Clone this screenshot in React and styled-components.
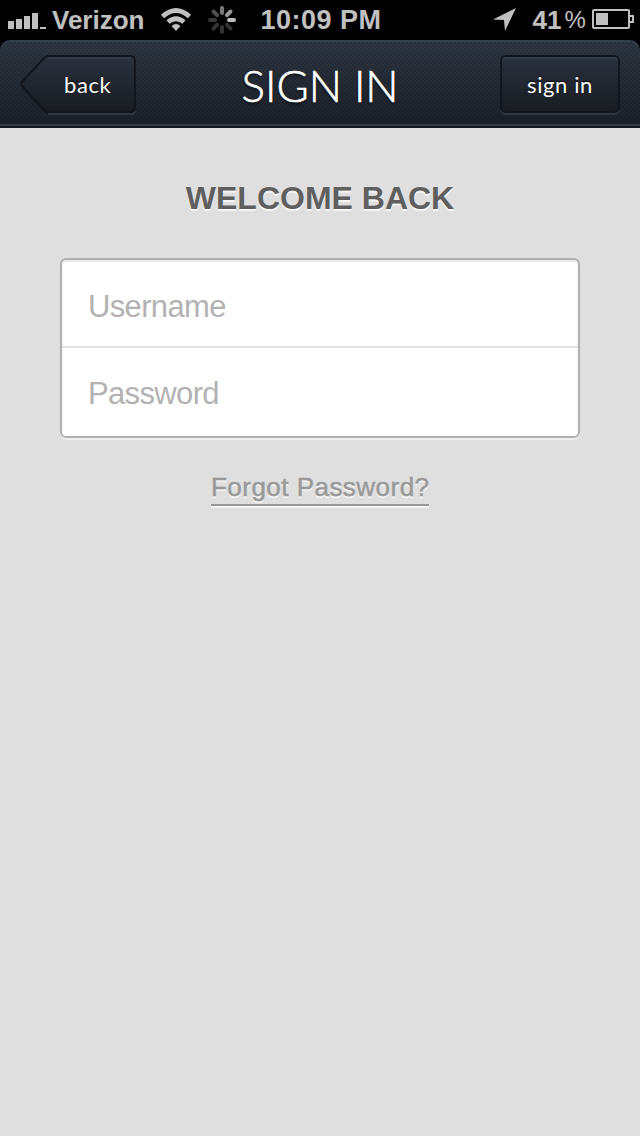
import React from 'react';
import styled, { createGlobalStyle } from 'styled-components';

const GlobalStyle = createGlobalStyle`
  *, *::before, *::after { box-sizing: border-box; }
  body { margin: 0; background: #000; }
`;

const Screen = styled.div`
  width: 640px;
  min-height: 1136px;
  display: flex;
  flex-direction: column;
  background: #dfdfdf;
  font-family: "Liberation Sans", Arial, sans-serif;
`;

const StatusBar = styled.header`
  height: 40px;
  display: flex;
  align-items: center;
  padding: 0 5px 0 8px;
  background: #000;
  color: #c0c0c0;
`;

const StatusText = styled.span`
  font-size: ${(p) => p.$size || '26px'};
  line-height: 40px;
  font-weight: ${(p) => (p.$light ? 400 : 700)};
  letter-spacing: ${(p) => p.$tracking || '0'};
  margin-left: ${(p) => p.$left || '0'};
  white-space: nowrap;
`;

const Clock = styled(StatusText)`
  width: 122px;
`;

const StatusIcon = styled.svg`
  display: block;
  flex: none;
  margin-left: ${(p) => p.$left || '0'};
`;

const NavShell = styled.div`
  background: #000;
`;

const NavBar = styled.nav`
  height: 88px;
  display: flex;
  align-items: flex-start;
  justify-content: space-between;
  padding: 15px 20px 0;
  border-radius: 10px 10px 0 0;
  background:
    radial-gradient(circle at 1px 1px, rgba(0, 0, 0, 0.1) 0.8px, transparent 1px) 0 0 / 4px 4px,
    radial-gradient(circle at 1px 1px, rgba(0, 0, 0, 0.1) 0.8px, transparent 1px) 2px 2px / 4px 4px,
    linear-gradient(#2e3743, #1b1f27);
  box-shadow:
    inset 0 2px 0 #33404c,
    inset 0 -2px 0 #14171d,
    inset 0 -4px 0 #363c43;
`;

const Title = styled.h1`
  margin: 0;
  font: 300 44px/60px Lato, sans-serif;
  color: #fff;
  -webkit-text-stroke: 0.6px #fff;
  text-shadow: 0 2px 3px rgba(0, 0, 0, 0.6);
  white-space: nowrap;
`;

const buttonLabel = `
  font: 400 22px/60px Lato, sans-serif;
  letter-spacing: 0.6px;
  color: #fff;
  text-shadow: 0 -1px 1px rgba(0, 0, 0, 0.8);
`;

const BackButton = styled.button`
  ${buttonLabel}
  width: 120px;
  height: 60px;
  padding: 0 0 0 44px;
  border: 0;
  text-align: left;
  background: none;
  display: grid;
`;

const BackShape = styled.svg`
  grid-area: 1 / 1;
  margin-left: -44px;
`;

const BackLabel = styled.span`
  grid-area: 1 / 1;
`;

const ActionButton = styled.button`
  ${buttonLabel}
  width: 120px;
  height: 58px;
  padding: 2px 0 0;
  border: 2px solid #12151b;
  border-radius: 6px;
  background: linear-gradient(#29313d, #191c22);
  line-height: 52px;
  box-shadow: inset 0 2px 0 rgba(75, 88, 102, 0.35), 0 2px 0 #30363e;
`;

const Content = styled.main`
  flex: 1;
  display: flex;
  flex-direction: column;
  align-items: center;
  padding-top: 50px;
`;

const Heading = styled.h2`
  margin: 0;
  font-size: 32px;
  line-height: 40px;
  font-weight: 700;
  color: #5f5f5f;
  text-shadow: 0 2px 0 #f6f6f6;
  white-space: nowrap;
`;

const FieldGroup = styled.section`
  width: 520px;
  height: 180px;
  margin-top: 40px;
  border: 2px solid #b0b0b0;
  border-radius: 6px;
  background: #fff;
  box-shadow: inset 0 2px 2px #e6e6e6, 0 2px 0 #efefef;
`;

const Field = styled.div`
  height: 88px;
  padding: ${(p) => (p.$divided ? '3px' : '2px')} 0 0 26px;
  color: #b2b2b2;
  font-size: 31px;
  line-height: 88px;
  letter-spacing: -0.65px;
  border-bottom: ${(p) => (p.$divided ? '2px solid #e2e2e2' : '0')};
`;

const ForgotLink = styled.a`
  margin-top: 34px;
  width: 218px;
  height: 34px;
  font-size: 26px;
  line-height: 30px;
  letter-spacing: 0.47px;
  white-space: nowrap;
  color: #999;
  -webkit-text-stroke: 0.5px #999;
  border-bottom: 2px solid #999;
  box-shadow: 0 2px 0 #f4f4f4;
  text-shadow: 0 2px 0 #f4f4f4;
`;

const spokes = ['#777', '#999', '#bbb', '#333', '#333', '#333', '#383838', '#505050'];

export default function App() {
  return (
    <>
      <GlobalStyle />
      <Screen>
        <StatusBar>
          <StatusIcon width="38" height="40" fill="#c0c0c0">
            <path d="M0 21h6v8H0zM8 19h6v10H8zM16 16h6v13h-6zM24 13h6v16h-6zM32 27h6v2h-6z" />
          </StatusIcon>
          <StatusText $left="6px">Verizon</StatusText>
          <StatusIcon $left="16px" width="32" height="40" fill="none" stroke="#c0c0c0">
            <path d="M2.500 16.500Q16 4.500 29.500 16.500" strokeWidth="4.800" />
            <path d="M8 22Q16 15.500 24 22" strokeWidth="4.800" />
            <path d="M11.500 26Q16 22 20.500 26L16 31Z" fill="#c0c0c0" stroke="none" />
          </StatusIcon>
          <StatusIcon $left="16px" width="28" height="40">
            {spokes.map((color, i) => (
              <path
                key={i}
                d="M14 8v5"
                stroke={color}
                strokeWidth="4"
                strokeLinecap="round"
                transform={`rotate(${i * 45} 14 20)`}
              />
            ))}
          </StatusIcon>
          <Clock $left="24px" $size="27px" $tracking="0.5px">10:09 PM</Clock>
          <StatusIcon $left="111px" width="24" height="40" fill="#c0c0c0">
            <path d="M23 8L12 31L11 20L0 19.500Z" />
          </StatusIcon>
          <StatusText $left="15px">41</StatusText>
          <StatusText $light $left="3px" $size="24px">%</StatusText>
          <StatusIcon $left="auto" width="43" height="40" fill="none" stroke="#c0c0c0" strokeWidth="2">
            <rect x="1" y="10" width="36" height="18" rx="1" />
            <path d="M38 16h3v6h-3" />
            <path d="M4 13h12v12H4z" fill="#c0c0c0" stroke="none" />
          </StatusIcon>
        </StatusBar>
        <NavShell>
          <NavBar>
            <BackButton>
              <BackShape width="120" height="60">
                <defs>
                  <linearGradient id="backFill" x1="0" y1="0" x2="0" y2="1">
                    <stop offset="0" stopColor="#29313d" />
                    <stop offset="1" stopColor="#191c22" />
                  </linearGradient>
                </defs>
                <path d="M28 59H111Q115 59 115 55" fill="none" stroke="#30363e" strokeWidth="2" />
                <path
                  d="M28 1H110Q115 1 115 6V52Q115 57 110 57H28Q26 57 24 55L2 31Q0 29 2 27L24 3Q26 1 28 1Z"
                  fill="url(#backFill)"
                  stroke="#12151b"
                  strokeWidth="2"
                />
                <path d="M28 3H111" stroke="#333c48" strokeWidth="2" />
              </BackShape>
              <BackLabel>back</BackLabel>
            </BackButton>
            <Title>SIGN IN</Title>
            <ActionButton>sign in</ActionButton>
          </NavBar>
        </NavShell>
        <Content>
          <Heading>WELCOME BACK</Heading>
          <FieldGroup>
            <Field $divided>Username</Field>
            <Field>Password</Field>
          </FieldGroup>
          <ForgotLink>Forgot Password?</ForgotLink>
        </Content>
      </Screen>
    </>
  );
}
